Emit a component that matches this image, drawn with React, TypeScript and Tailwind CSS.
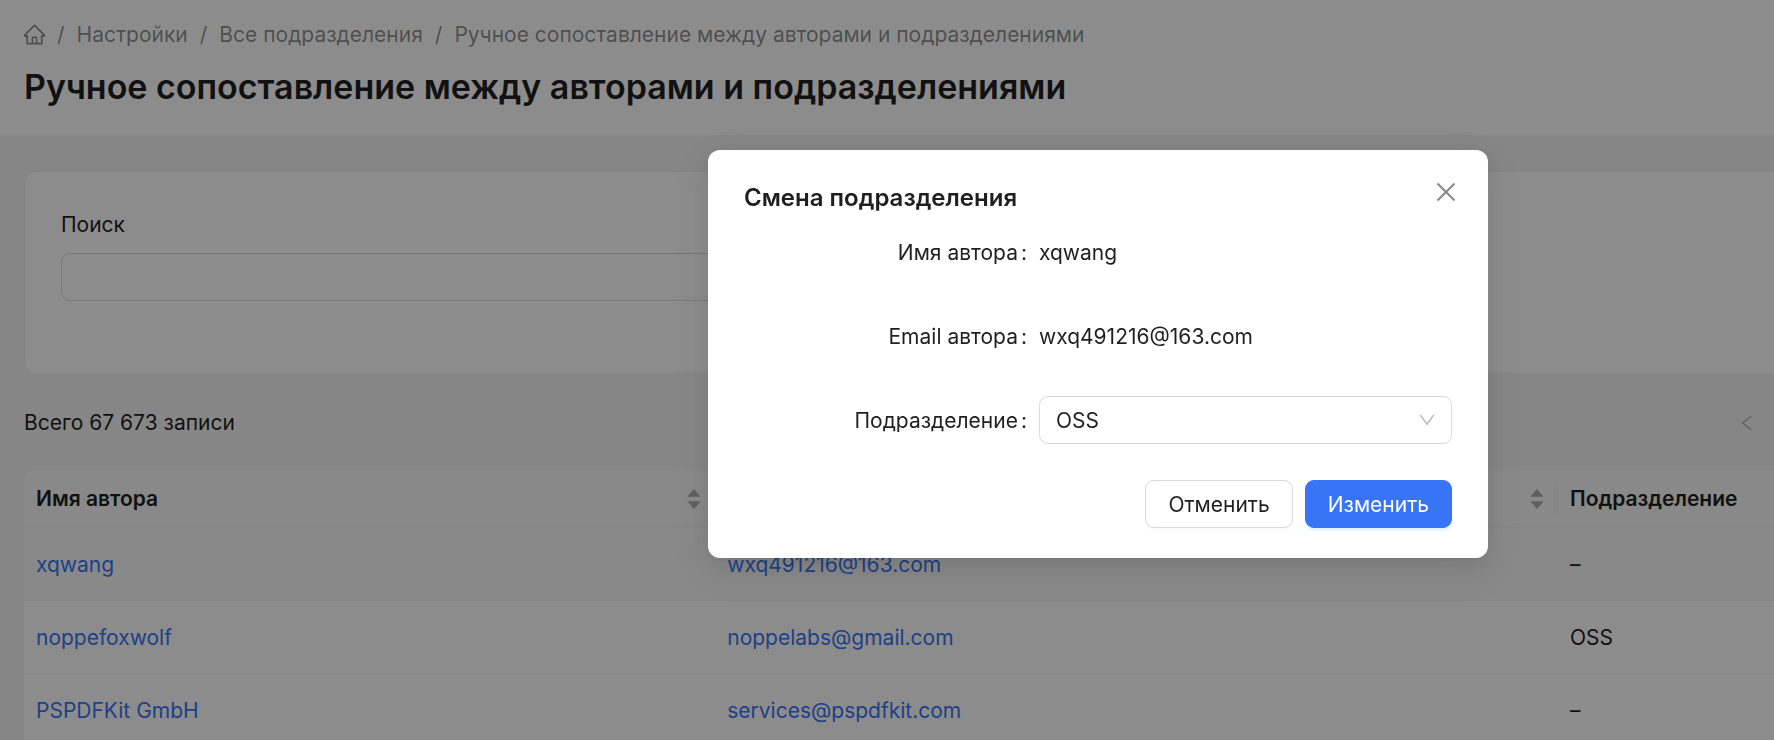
import { useEffect, useState } from "react";
import type { ReactNode } from "react";
import {
  AiFillCaretDown,
  AiFillCaretUp,
  AiOutlineDown,
  AiOutlineHome,
  AiOutlineLeft,
} from "react-icons/ai";

type Author = {
  name: string;
  email: string;
  department: string;
};

const authors: Author[] = [
  { name: "xqwang", email: "wxq491216@163.com", department: "–" },
  { name: "noppefoxwolf", email: "noppelabs@gmail.com", department: "OSS" },
  { name: "PSPDFKit GmbH", email: "services@pspdfkit.com", department: "–" },
];

const pageTitle = "Ручное сопоставление между авторами и подразделениями";

// ant icons keep a 64 unit margin around the drawing
const iconBox = "64 64 896 896";

function Breadcrumbs() {
  return (
    <nav className="flex items-center gap-3 text-black/45">
      <a href="#home" aria-label="Главная">
        <AiOutlineHome viewBox={iconBox} className="size-[21px]" />
      </a>
      <span>/</span>
      <a href="#settings">Настройки</a>
      <span>/</span>
      <a href="#departments">Все подразделения</a>
      <span>/</span>
      <span>{pageTitle}</span>
    </nav>
  );
}

function SortableHead({ children }: { children: ReactNode }) {
  return (
    <th className="border-b border-[#f0f0f0] py-3 pl-3 text-left font-semibold">
      <div className="flex items-center justify-between border-r border-[#f0f0f0] pr-[11px]">
        {children}
        <button type="button" aria-label="Сортировать" className="flex w-[18px] flex-col items-center text-black/30">
          <AiFillCaretUp viewBox={iconBox} className="size-4" />
          <AiFillCaretDown viewBox={iconBox} className="-mt-1 size-4" />
        </button>
      </div>
    </th>
  );
}

function AuthorsTable() {
  return (
    <div className="overflow-hidden rounded-tl-xl bg-white">
      <table className="w-full table-fixed border-separate border-spacing-0">
        <colgroup>
          <col className="w-[39.5%]" />
          <col />
          <col className="w-[216px]" />
        </colgroup>
        <thead className="bg-[#fafafa]">
          <tr>
            <SortableHead>Имя автора</SortableHead>
            <SortableHead>Email автора</SortableHead>
            <th className="border-b border-[#f0f0f0] p-3 text-left font-semibold">Подразделение</th>
          </tr>
        </thead>
        <tbody>
          {authors.map((author) => (
            <tr key={author.name} className="first:bg-[#fafafa]">
              <td className="border-b border-[#f0f0f0] px-3 pt-5 pb-[19px]">
                <a href="#author" className="text-[#3875f6]">{author.name}</a>
              </td>
              <td className="border-b border-[#f0f0f0] px-3 pt-5 pb-[19px]">
                <a href="#author" className="text-[#3875f6]">{author.email}</a>
              </td>
              <td className="border-b border-[#f0f0f0] px-3 pt-5 pb-[19px]">{author.department}</td>
            </tr>
          ))}
        </tbody>
      </table>
    </div>
  );
}

function FormRow({ label, htmlFor, children }: { label: string; htmlFor?: string; children: ReactNode }) {
  const LabelTag = htmlFor ? "label" : "span";
  return (
    <div className="flex h-12 items-center">
      <LabelTag htmlFor={htmlFor} className="w-5/12 pr-3 text-right">
        {label}
        <span className="ml-[3px]">:</span>
      </LabelTag>
      <div className="w-7/12">{children}</div>
    </div>
  );
}

function DepartmentModal({ author, onClose }: { author: Author; onClose: () => void }) {
  const [department, setDepartment] = useState("OSS");

  // close modal on escape key press
  useEffect(() => {
    const handleEsc = (event: KeyboardEvent) => {
      if (event.key === "Escape") {
        onClose();
      }
    };
    document.addEventListener("keydown", handleEsc);
    return () => document.removeEventListener("keydown", handleEsc);
  }, [onClose]);

  return (
    <div className="fixed inset-0 z-50 flex items-start justify-center bg-black/45 pt-[150px] pl-[422px]">
      <div
        role="dialog"
        aria-labelledby="modal-title"
        className="relative w-full max-w-[780px] rounded-xl bg-white px-9 py-[30px] shadow-[0_9px_24px_rgba(0,0,0,0.08),0_4px_9px_-6px_rgba(0,0,0,0.12),0_13px_42px_12px_rgba(0,0,0,0.05)]"
      >
        <h2 id="modal-title" className="mb-3 text-2xl leading-9 font-semibold">
          Смена подразделения
        </h2>
        <button
          type="button"
          aria-label="Закрыть"
          onClick={onClose}
          className="absolute top-[30px] right-[30px] text-black/45"
        >
          <svg viewBox={iconBox} className="size-6" fill="currentColor">
            <path d="M166 224l58-58 288 288 288-288 58 58-288 288 288 288-58 58-288-288-288 288-58-58 288-288z" />
          </svg>
        </button>

        <form className="flex flex-col gap-9" onSubmit={(e) => e.preventDefault()}>
          <FormRow label="Имя автора">{author.name}</FormRow>
          <FormRow label="Email автора">{author.email}</FormRow>
          <FormRow label="Подразделение" htmlFor="department">
            <div className="relative flex items-center">
              <select
                id="department"
                value={department}
                onChange={(e) => setDepartment(e.target.value)}
                className="h-12 w-full appearance-none rounded-[9px] border border-[#d9d9d9] bg-white px-4"
              >
                <option value="OSS">OSS</option>
                <option value="–">–</option>
              </select>
              <AiOutlineDown
                viewBox={iconBox}
                className="pointer-events-none absolute right-4 size-[18px] text-black/25"
              />
            </div>
          </FormRow>

          {/* footer */}
          <div className="flex justify-end gap-3">
            <button
              type="button"
              onClick={onClose}
              className="h-12 rounded-[9px] border border-[#d9d9d9] bg-white px-[22px] shadow-[0_3px_0_rgba(0,0,0,0.02)]"
            >
              Отменить
            </button>
            <button
              type="submit"
              className="h-12 rounded-[9px] border border-[#3875f6] bg-[#3875f6] px-[22px] text-white shadow-[0_3px_0_rgba(5,145,255,0.1)]"
            >
              Изменить
            </button>
          </div>
        </form>
      </div>
    </div>
  );
}

export default function App() {
  const [isOpen, setIsOpen] = useState(true);

  return (
    <div className="h-screen overflow-hidden bg-[#f4f4f4] font-['Inter',sans-serif] text-[21px] leading-[33px] text-[#1f1f1f]">
      <header className="bg-white px-6 pt-[18px] pb-6">
        <Breadcrumbs />
        <h1 className="mt-3 text-[34px] leading-[48px] font-semibold">{pageTitle}</h1>
      </header>

      <main className="pt-9 pl-6">
        <section className="rounded-l-xl border border-r-0 border-[#f0f0f0] bg-white px-9 pt-9 pb-[72px]">
          <label htmlFor="search" className="block">
            Поиск
          </label>
          <input
            id="search"
            type="text"
            className="mt-3 block h-12 w-1/2 rounded-[9px] border border-[#d9d9d9] px-4"
          />
        </section>

        <div className="flex items-center justify-between pt-8 pr-[18px] pb-[31px]">
          <span>Всего 67 673 записи</span>
          <button type="button" aria-label="Назад" className="text-black/25">
            <AiOutlineLeft viewBox={iconBox} className="size-[18px]" />
          </button>
        </div>

        <AuthorsTable />
      </main>

      {isOpen && <DepartmentModal author={authors[0]} onClose={() => setIsOpen(false)} />}
    </div>
  );
}
